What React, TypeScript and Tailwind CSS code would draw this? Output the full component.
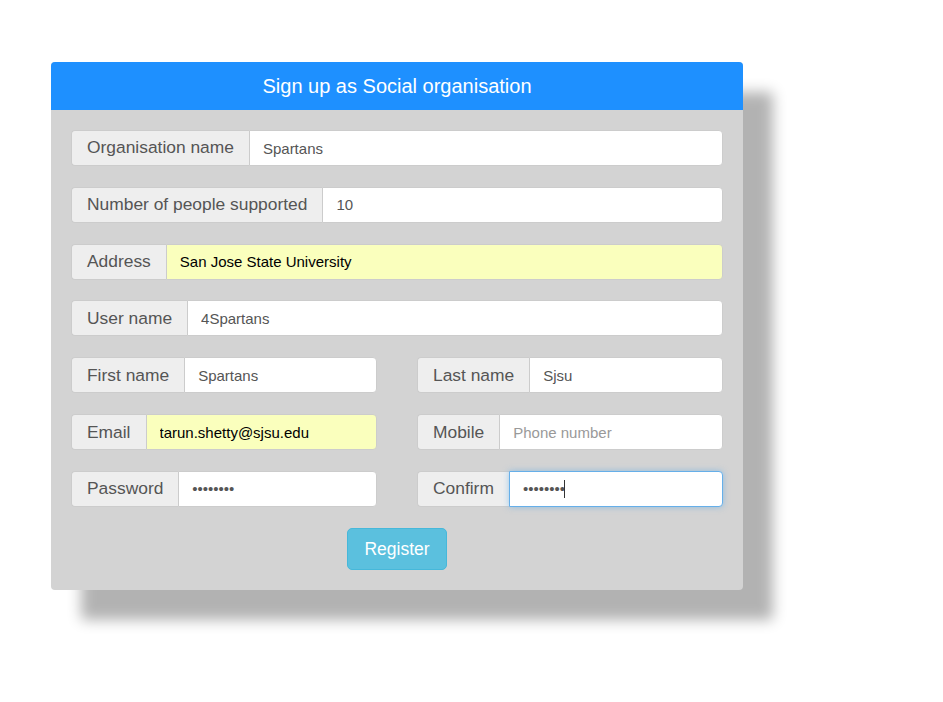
import React from "react";

const font = { fontFamily: '"Liberation Sans", Arial, sans-serif' };

interface FieldProps {
  label: string;
  value?: string;
  placeholder?: string;
  autofill?: boolean;
  password?: boolean;
  focused?: boolean;
}

function Field({ label, value, placeholder, autofill, password, focused }: FieldProps) {
  return (
    <div className="flex h-[36px] w-full">
      <span className="flex items-center whitespace-nowrap rounded-l-[4px] border border-r-0 border-[#ccc] bg-[#eee] px-[15px] pb-[1px] text-[17.4px] text-[#555]">
        {label}
      </span>
      <div className="relative h-full min-w-0 flex-1">
        <input
          readOnly
          type={password ? "password" : "text"}
          value={value ?? ""}
          placeholder={placeholder}
          className={
            "h-full w-full rounded-r-[4px] border px-[13px] text-[15px] outline-none placeholder:text-[#999] " +
            (focused
              ? "border-[#66afe9] shadow-[0_0_6px_rgba(102,175,233,0.6)] "
              : "border-[#ccc] ") +
            (autofill ? "bg-[#faffbd] text-black" : "bg-white text-[#555]")
          }
          style={font}
        />
        {focused && (
          <span className="absolute left-[55px] top-[9px] h-[18px] w-[1px] bg-[#333]" />
        )}
      </div>
    </div>
  );
}

export default function App() {
  return (
    <div className="min-h-[702px] w-full bg-white pl-[51px] pt-[62px]" style={font}>
      <div className="w-[692px] overflow-hidden rounded-[4px] bg-[#d3d3d3] shadow-[30px_30px_14px_rgba(0,0,0,0.3)]">
        <div className="flex h-[48px] items-center justify-center bg-[#1e90ff] text-[20px] text-white">
          Sign up as Social organisation
        </div>
        <div className="flex flex-col gap-[20.83px] px-[20px] pb-[20px] pt-[20px]">
          <Field label="Organisation name" value="Spartans" />
          <Field label="Number of people supported" value="10" />
          <Field label="Address" value="San Jose State University" autofill />
          <Field label="User name" value="4Spartans" />
          <div className="grid grid-cols-2 gap-[40px]">
            <Field label="First name" value="Spartans" />
            <Field label="Last name" value="Sjsu" />
          </div>
          <div className="grid grid-cols-2 gap-[40px]">
            <Field label="Email" value="tarun.shetty@sjsu.edu" autofill />
            <Field label="Mobile" placeholder="Phone number" />
          </div>
          <div className="grid grid-cols-2 gap-[40px]">
            <Field label="Password" value="password" password />
            <Field label="Confirm" value="password" password focused />
          </div>
          <div className="flex justify-center">
            <button className="h-[42px] rounded-[5px] border border-[#46b8da] bg-[#5bc0de] px-[16px] text-[17.5px] text-white">
              Register
            </button>
          </div>
        </div>
      </div>
    </div>
  );
}
